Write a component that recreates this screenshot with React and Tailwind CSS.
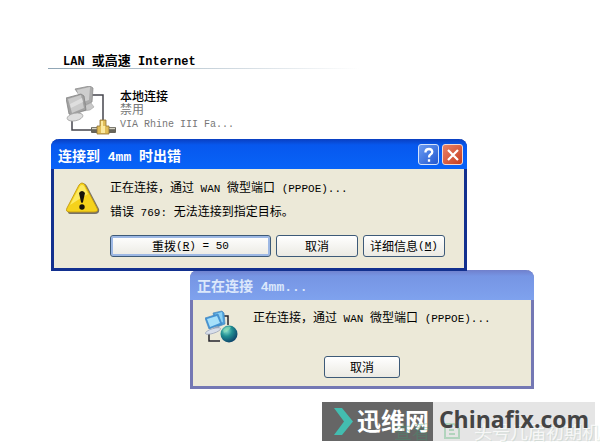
import React from 'react';

// Latin runs are set in a half-width face next to the Chinese text
const Latin = ({ children, className = 'text-[11px]' }) => (
  <span className={`leading-none whitespace-pre font-['Liberation_Mono','Noto_Sans_CJK_SC',monospace] ${className}`}>{children}</span>
);

const LanIcon = () => (
  <svg viewBox="0 0 50 50" className="h-[50px] w-[50px] shrink-0" fill="none">
    <path d="M26 9h11v25M6 32v12h22" stroke="#45454d" strokeWidth="1.5" />
    <path d="m9 3 15-3 3 2-1 14-6 3z" fill="#ababab" stroke="#8c8c8c" strokeWidth=".8" />
    <path d="m11 4 13-3-1 13-9 3z" fill="#cecece" />
    <path d="m20 19 5-2 3 4-4 3-7 1z" fill="#c9c9c9" stroke="#a2a2a2" strokeWidth=".6" />
    <path d="M0 12 15 8l3 2 2 14-14 5-3-1z" fill="#a2a2a2" stroke="#838383" strokeWidth=".8" />
    <path d="m2 13 13-4 3 13-12 5z" fill="#cacaca" />
    <path d="m4 18 12-6 1 4-12 6z" fill="#dedede" />
    <path d="m8 27 5-2 3 4-6 3z" fill="#9d9d9d" />
    <ellipse cx="9" cy="31" rx="8" ry="3.8" fill="#dedede" stroke="#a4a4a4" strokeWidth=".8" transform="rotate(-12 9 31)" />
    <rect x="25" y="41" width="25" height="6" rx="1" fill="#67645a" />
    <path d="M26 42.5h23" stroke="#d6d3c4" strokeWidth="1.4" />
    <path d="M34 34h6v6h3v8H31v-8h3z" fill="#e1bd58" stroke="#8d7032" strokeWidth=".8" />
    <path d="M35 35h2v5h2v7h-4z" fill="#fbe9a0" />
  </svg>
);

const WarningIcon = () => (
  <svg viewBox="0 0 34 34" className="mt-[7px] h-[34px] w-[34px] shrink-0">
    <path d="M15 3q3-4 6 1l12 23q1 5-4 5H5q-4 0-3-4z" fill="#77736a" />
    <path d="M13 3q3-4 6 0l12 23q2 4-3 4H4q-5 0-3-4z" fill="#f5d21b" stroke="#c39a12" strokeWidth=".9" />
    <path d="M14 4q2-2 4 0l4 8Q13 17 4 23z" fill="#fff27a" opacity=".75" />
    <path d="M13 11q3-4 6 0l-2 9q-1 2-2 0z" fill="#17130a" />
    <circle cx="16" cy="25" r="2.7" fill="#17130a" />
  </svg>
);

const DialupIcon = () => (
  <svg viewBox="0 0 34 34" className="h-[34px] w-[34px] shrink-0" fill="none">
    <defs>
      <radialGradient id="globe" cx=".35" cy=".3" r=".75">
        <stop offset="0" stopColor="#8be0cf" />
        <stop offset=".45" stopColor="#208f92" />
        <stop offset="1" stopColor="#0b3f68" />
      </radialGradient>
    </defs>
    <path d="M18 7h5v9M4 22v10h11" stroke="#24242c" strokeWidth="1.5" />
    <path d="m8 4 9-2 2 2 1 11-8 3z" fill="#4c9fdb" stroke="#4a88bb" strokeWidth=".7" />
    <path d="m10 5 7-2 1 10-7 3z" fill="#8ad2f6" />
    <path d="m0 9 13-4 4 10-13 5z" fill="#4394d6" stroke="#4888bd" strokeWidth=".7" />
    <path d="m2 10 10-3 3 7-10 4z" fill="#a6e0fa" />
    <path d="m8 19 5-2 2 3-5 2z" fill="#97a5bd" />
    <ellipse cx="8" cy="22" rx="8" ry="2.3" fill="#d9dfea" stroke="#99a2b6" strokeWidth=".7" transform="rotate(-18 8 22)" />
    <circle cx="24" cy="25" r="8.5" fill="url(#globe)" />
    <path d="M18 21q4-5 8-3l-2 3-5 3z" fill="#8fe0b4" opacity=".6" />
  </svg>
);

const XpButton = ({ children, className = '', focused = false }) => (
  <button
    type="button"
    className={`flex h-[22px] items-center justify-center rounded-[3px] border border-[#3d5a78] bg-linear-to-b from-white to-[#ebeae3] text-xs text-black ${
      focused ? 'shadow-[inset_0_0_0_2px_#9db8e4]' : ''
    } ${className}`}
  >
    {children}
  </button>
);

const ErrorDialog = () => (
  <section
    role="dialog"
    aria-labelledby="error-title"
    className="absolute top-[139px] left-[51px] z-10 w-[416px] rounded-t-lg border-x-3 border-b-3 border-[#12308f] bg-[#ece9d8]"
  >
    <header className="-mx-[3px] flex h-[30px] items-center justify-between rounded-t-lg bg-linear-to-b from-[#0a3fc0] via-[#0758ee] via-20% to-[#0863f8] pt-px pr-1 pl-[7px] text-white">
      <h2 id="error-title" className="text-sm font-bold">
        连接到<Latin className="text-[13px]"> 4mm </Latin>时出错
      </h2>
      <div className="flex gap-[3px]">
        <button type="button" aria-label="帮助" className="flex h-[21px] w-[21px] items-center justify-center rounded-[3px] border border-[#d5e3fb] bg-linear-to-br from-[#6b9bf2] to-[#2257d0]">
          <svg viewBox="0 0 16 16" className="h-4 w-4" fill="none" stroke="white" strokeWidth="2.3">
            <path d="M4.5 5.5V4.5Q5 2 8 2t3.3 2.8Q11.3 6.5 9.5 7.5 8 8.3 8 10.5M8 12.3v2.4" />
          </svg>
        </button>
        <button type="button" aria-label="关闭" className="flex h-[21px] w-[21px] items-center justify-center rounded-[3px] border border-[#f4d8d0] bg-linear-to-br from-[#e98267] to-[#c63b1b]">
          <svg viewBox="0 0 16 16" className="h-4 w-4" stroke="white" strokeWidth="2.2">
            <path d="m3 3 10 10M13 3 3 13" />
          </svg>
        </button>
      </div>
    </header>
    <div className="flex gap-[10px] pt-[6px] pl-3">
      <WarningIcon />
      <div className="text-xs leading-6">
        <p>
          正在连接，通过<Latin> WAN </Latin>微型端口<Latin> (PPPOE)...</Latin>
        </p>
        <p>
          错误<Latin> 769: </Latin>无法连接到指定目标。
        </p>
      </div>
    </div>
    <div className="flex gap-[5px] pt-3 pr-[19px] pb-[11px] pl-[56px]">
      <XpButton className="flex-1" focused>
        重拨<Latin>(<u>R</u>) = 50</Latin>
      </XpButton>
      <XpButton className="w-[82px]">取消</XpButton>
      <XpButton className="w-[82px]">
        详细信息<Latin>(<u>M</u>)</Latin>
      </XpButton>
    </div>
  </section>
);

const ConnectingDialog = () => (
  <section
    role="dialog"
    aria-labelledby="connecting-title"
    className="absolute top-[270px] left-[190px] w-[344px] rounded-t-lg border-x-3 border-b-3 border-[#7478b4] bg-[#ece9d8]"
  >
    <header className="-mx-[3px] flex h-[30px] items-center rounded-t-lg bg-linear-to-b from-[#7080cc] via-[#7695e4] via-20% to-[#7fa2ee] pl-[7px] text-[#dce8fb]">
      <h2 id="connecting-title" className="text-sm font-bold">
        正在连接<Latin className="text-[13px]"> 4mm...</Latin>
      </h2>
    </header>
    <div className="flex gap-[14px] pt-[9px] pl-3">
      <DialupIcon />
      <p className="text-xs leading-4">
        正在连接，通过<Latin> WAN </Latin>微型端口<Latin> (PPPOE)...</Latin>
      </p>
    </div>
    <div className="flex justify-center pt-[13px] pb-2">
      <XpButton className="w-[76px]">取消</XpButton>
    </div>
  </section>
);

const Watermark = () => (
  <footer className="absolute top-[402px] right-[5px] z-20 flex h-[39px]">
    <div className="flex w-[111px] items-center gap-1 bg-[#666] pl-3 text-white">
      <svg viewBox="0 0 19 27" className="h-[27px] w-[19px]" fill="#43bdb0">
        <path d="M0 0h8l11 13.5L8 27H0l10-13.5z" />
      </svg>
      <span className="pb-1 text-2xl font-bold whitespace-nowrap">迅维网</span>
    </div>
    <div className="flex w-[162px] items-center justify-center bg-[#e5e5e5] pb-1 font-['Open_Sans','Noto_Sans_CJK_SC',sans-serif] text-[23px] font-bold text-[#444]">
      <span className="z-10">Chinafix.com</span>
    </div>
    {/* faint older stamp under the site name */}
    <div className="absolute -right-[5px] bottom-0 flex items-center gap-3 text-lg leading-5 whitespace-nowrap">
      <span className="text-[#3f9a70]/35">查看</span>
      <svg viewBox="0 0 20 20" className="h-5 w-5" fill="none" stroke="#8fc9a4" strokeWidth="2" opacity=".6">
        <path d="M3 3h9l5 5v9H3zM7 9h5M7 13h6" />
      </svg>
      <span className="text-white/75 [text-shadow:1px_1px_0_#a9c4b455]">头号几届初期机</span>
    </div>
  </footer>
);

const App = () => {
  return (
    <main className="relative min-h-screen overflow-hidden bg-white font-['Noto_Sans_CJK_SC',sans-serif] text-black">
      <div className="pt-[52px] pl-12">
        <h1 className="pl-[15px] text-[13px] leading-4 font-bold">
          <Latin className="text-xs">LAN </Latin>或高速<Latin className="text-xs"> Internet</Latin>
        </h1>
        <div className="h-px w-[312px] bg-linear-to-r from-[#8fa5b5] to-white" />
        <div className="flex gap-1 pt-[17px] pl-[18px]">
          <LanIcon />
          <div className="pt-[3px] text-xs leading-[13px]">
            <p className="font-medium">本地连接</p>
            <p className="text-[#777]">禁用</p>
            <p className="text-[#777]"><Latin className="text-[10px]">VIA Rhine III Fa...</Latin></p>
          </div>
        </div>
      </div>
      <ErrorDialog />
      <ConnectingDialog />
      <Watermark />
    </main>
  );
};

export default App;
